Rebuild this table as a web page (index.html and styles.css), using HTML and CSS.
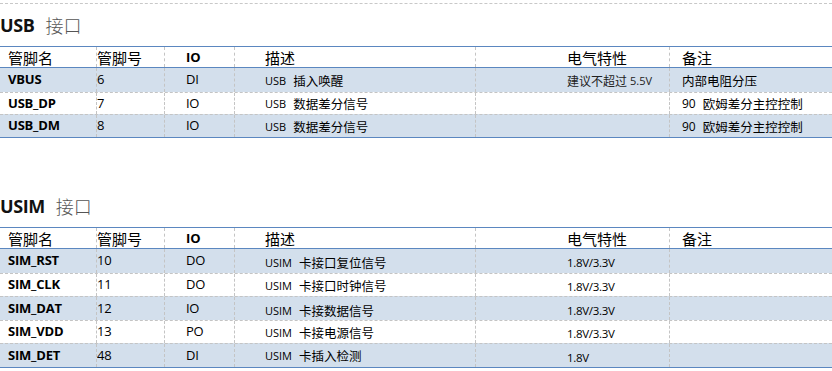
FILE: index.html
```html
<!DOCTYPE html>
<html lang="zh-CN">
<head>
<meta charset="utf-8">
<title>USB / USIM 接口</title>
<link rel="stylesheet" href="styles.css">
</head>
<body>
<div class="page">
  <section class="sec">
    <h2 class="title"><span class="t-en">USB</span><span class="t-zh">接口</span></h2>
    <div class="tbl">
      <div class="row hdr">
        <div class="c c1">管脚名</div><div class="c c2">管脚号</div><div class="c c3 io-h">IO</div><div class="c c4">描述</div><div class="c c5">电气特性</div><div class="c c6">备注</div>
      </div>
      <div class="row body band h24">
        <div class="c c1 name">VBUS</div><div class="c c2 num">6</div><div class="c c3 num">DI</div><div class="c c4 desc"><span class="lat">USB</span>插入唤醒</div><div class="c c5 desc small">建议不超过 <span class="lat">5.5V</span></div><div class="c c6 desc">内部电阻分压</div>
      </div>
      <div class="row body h21">
        <div class="c c1 name">USB_DP</div><div class="c c2 num">7</div><div class="c c3 num">IO</div><div class="c c4 desc"><span class="lat">USB</span>数据差分信号</div><div class="c c5 desc"></div><div class="c c6 desc"><span class="lat n90">90</span>欧姆差分主控控制</div>
      </div>
      <div class="row body band h22">
        <div class="c c1 name">USB_DM</div><div class="c c2 num">8</div><div class="c c3 num">IO</div><div class="c c4 desc"><span class="lat">USB</span>数据差分信号</div><div class="c c5 desc"></div><div class="c c6 desc"><span class="lat n90">90</span>欧姆差分主控控制</div>
      </div>
    </div>
  </section>

  <section class="sec">
    <h2 class="title"><span class="t-en">USIM</span><span class="t-zh">接口</span></h2>
    <div class="tbl">
      <div class="row hdr">
        <div class="c c1">管脚名</div><div class="c c2">管脚号</div><div class="c c3 io-h">IO</div><div class="c c4">描述</div><div class="c c5">电气特性</div><div class="c c6">备注</div>
      </div>
      <div class="row body band h24">
        <div class="c c1 name">SIM_RST</div><div class="c c2 num">10</div><div class="c c3 num">DO</div><div class="c c4 desc low"><span class="lat">USIM</span>卡接口复位信号</div><div class="c c5 volt">1.8V/3.3V</div><div class="c c6"></div>
      </div>
      <div class="row body h22">
        <div class="c c1 name">SIM_CLK</div><div class="c c2 num">11</div><div class="c c3 num">DO</div><div class="c c4 desc"><span class="lat">USIM</span>卡接口时钟信号</div><div class="c c5 volt">1.8V/3.3V</div><div class="c c6"></div>
      </div>
      <div class="row body band h23">
        <div class="c c1 name">SIM_DAT</div><div class="c c2 num">12</div><div class="c c3 num">IO</div><div class="c c4 desc low"><span class="lat">USIM</span>卡接数据信号</div><div class="c c5 volt">1.8V/3.3V</div><div class="c c6"></div>
      </div>
      <div class="row body h22">
        <div class="c c1 name">SIM_VDD</div><div class="c c2 num">13</div><div class="c c3 num">PO</div><div class="c c4 desc"><span class="lat">USIM</span>卡接电源信号</div><div class="c c5 volt">1.8V/3.3V</div><div class="c c6"></div>
      </div>
      <div class="row body band h23">
        <div class="c c1 name">SIM_DET</div><div class="c c2 num">48</div><div class="c c3 num">DI</div><div class="c c4 desc"><span class="lat">USIM</span>卡插入检测</div><div class="c c5 volt">1.8V</div><div class="c c6"></div>
      </div>
    </div>
  </section>
</div>
</body>
</html>
```
FILE: styles.css
```css
html, body {
  margin: 0;
  padding: 0;
  background: #ffffff;
}

body {
  font-family: "Open Sans", "Noto Sans CJK SC", sans-serif;
  color: #000000;
  width: 832px;
  overflow: hidden;
}

.page {
  margin-top: 3px;
  border-top: 1px dashed #c8c8c8;
}

.sec + .sec {
  margin-top: 47px;
}

.title {
  margin: 0;
  height: 42px;
  display: flex;
  align-items: center;
  font-weight: normal;
}

.t-en {
  font-family: "Open Sans", sans-serif;
  font-weight: 700;
  font-size: 18px;
  letter-spacing: -0.4px;
  color: #111111;
}

.t-zh {
  font-family: "Noto Sans CJK SC", sans-serif;
  font-weight: 300;
  font-size: 18px;
  color: #555555;
  margin-left: 11px;
}

.tbl {
  border-top: 1px solid #5b87c0;
  border-bottom: 1px solid #5b87c0;
}

.row {
  display: grid;
  grid-template-columns: 97px 68px 70px 241px 194px 1fr;
}

.hdr {
  height: 20px;
  border-bottom: 1px solid #5b87c0;
  background: #ffffff;
}

.row.body + .row.body {
  border-top: 1px dashed #c4c4c4;
}

.band {
  background: #d3dfec;
}

.h21 { height: 21px; }
.h22 { height: 22px; }
.h23 { height: 23px; }
.h24 { height: 24px; }

.c {
  display: flex;
  align-items: center;
  white-space: nowrap;
  overflow: hidden;
  border-right: 1px dashed #c4c4c4;
  box-sizing: border-box;
}

.c6 {
  border-right: none;
}

.c1 { padding-left: 8px; }
.c2 { padding-left: 0; }
.c3 { padding-left: 21px; }
.c4 { padding-left: 30px; }
.c5 { padding-left: 91px; }
.c6 { padding-left: 12px; }

.hdr .c {
  font-family: "Noto Sans CJK SC", sans-serif;
  font-size: 15px;
  font-weight: 400;
  color: #000000;
}

.hdr .io-h {
  font-family: "Open Sans", sans-serif;
  font-weight: 700;
  font-size: 13px;
}

.name {
  font-family: "Open Sans", sans-serif;
  font-weight: 700;
  font-size: 13px;
  letter-spacing: -0.2px;
  padding-bottom: 2px;
}

.num {
  font-family: "Open Sans", sans-serif;
  font-size: 13px;
  letter-spacing: -0.3px;
  padding-bottom: 2px;
}

.desc {
  font-family: "Noto Sans CJK SC", sans-serif;
  font-size: 12.5px;
}

.desc.low {
  padding-top: 3px;
}

.lat {
  font-family: "Open Sans", sans-serif;
  font-size: 11px;
  margin-right: 7px;
}

.small {
  font-size: 12px;
  color: #222222;
}

.small .lat {
  margin-right: 0;
  margin-left: 3px;
}

.n90 {
  font-size: 12px;
  margin-right: 7px;
}

.volt {
  font-family: "Open Sans", sans-serif;
  font-size: 11.5px;
  letter-spacing: -0.3px;
  padding-top: 3px;
}
```
